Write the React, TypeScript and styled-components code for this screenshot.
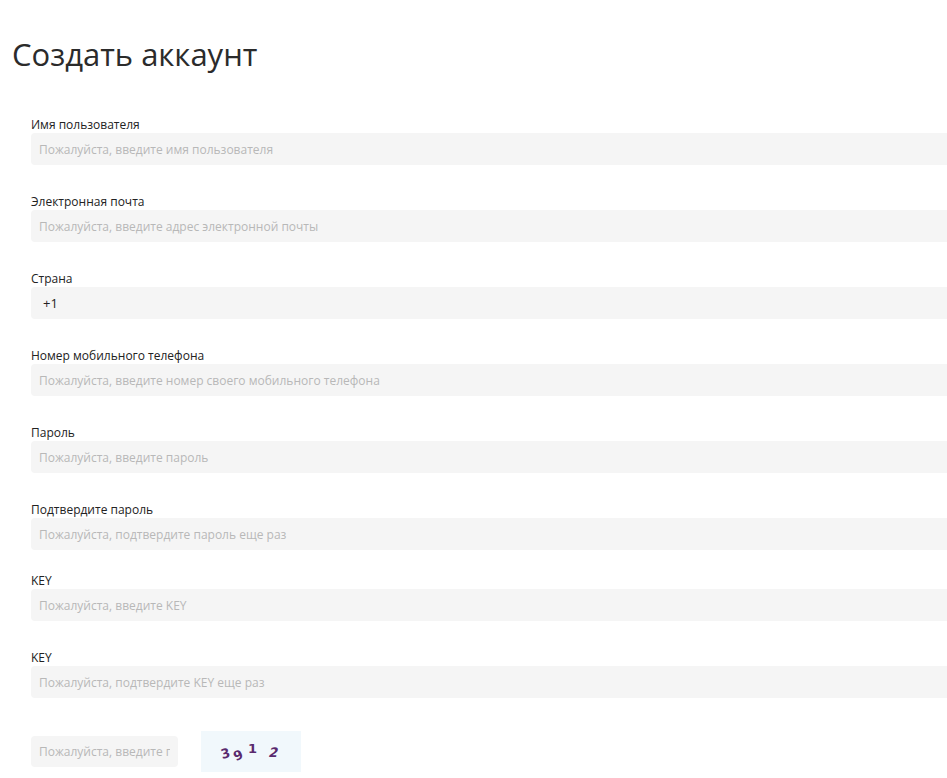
import React from "react";
import styled, { createGlobalStyle } from "styled-components";

const Global = createGlobalStyle`
  body { margin: 0; background: #fff; font-family: "Open Sans", "Noto Sans", sans-serif; }
`;
const Page = styled.div` padding: 30px 0 0 12px; `;
const Title = styled.h1`
  margin: 0 0 38px 0; font-weight: 400; font-size: 31px; line-height: 48px; color: #2b2b2b;
`;
const Form = styled.div` padding-left: 19px; display: flex; flex-direction: column; `;
const Field = styled.div<{ $gap: number }>` display: flex; flex-direction: column; margin-bottom: ${p => p.$gap}px; `;
const Label = styled.label` font-size: 12px; line-height: 17px; color: #222; `;
const Input = styled.input`
  box-sizing: border-box; height: 32px; width: 930px; border: none; outline: none; border-radius: 4px;
  background: #f5f5f5; padding: 0 8px; font-family: inherit; font-size: 12px;
  color: #222;
  &::placeholder { color: #b8b8b8; }
`;
const Value = styled.div`
  box-sizing: border-box; height: 32px; width: 930px; border-radius: 4px; background: #f5f5f5;
  padding: 0 12px; font-size: 13px; color: #222; display: flex; align-items: center;
`;
const CaptchaRow = styled.div` display: flex; align-items: center; gap: 23px; margin-top: 5px; `;
const SmallInput = styled(Input)` width: 147px; height: 31px; `;
const Captcha = styled.div` width: 100px; height: 41px; background: #f1f8fc; `;

const fields: [string, string, number][] = [
  ["Имя пользователя", "Пожалуйста, введите имя пользователя", 28],
  ["Электронная почта", "Пожалуйста, введите адрес электронной почты", 28],
  ["Страна", "", 28],
  ["Номер мобильного телефона", "Пожалуйста, введите номер своего мобильного телефона", 28],
  ["Пароль", "Пожалуйста, введите пароль", 28],
  ["Подтвердите пароль", "Пожалуйста, подтвердите пароль еще раз", 22],
  ["KEY", "Пожалуйста, введите KEY", 28],
  ["KEY", "Пожалуйста, подтвердите KEY еще раз", 28],
];

export default function App() {
  return (
    <Page>
      <Global />
      <Title>Создать аккаунт</Title>
      <Form>
        {fields.map(([l, p, g], i) => (
          <Field key={i} $gap={g}>
            <Label>{l}</Label>
            {l === "Страна" ? <Value>+1</Value> : <Input placeholder={p} />}
          </Field>
        ))}
        <CaptchaRow>
          <SmallInput placeholder="Пожалуйста, введите графический код" />
          <Captcha>
            <svg width="100" height="41" viewBox="0 0 100 41">
              <g fill="#5a2a6e" fontFamily="DejaVu Sans" fontWeight="bold" fontSize="13">
                <text x="20" y="27" transform="rotate(-15 24 23)">3</text>
                <text x="33" y="29" transform="rotate(-25 37 25)">9</text>
                <text x="47" y="22">1</text>
                <text x="68" y="26" transform="skewX(-15) translate(6 0)">2</text>
              </g>
            </svg>
          </Captcha>
        </CaptchaRow>
      </Form>
    </Page>
  );
}
